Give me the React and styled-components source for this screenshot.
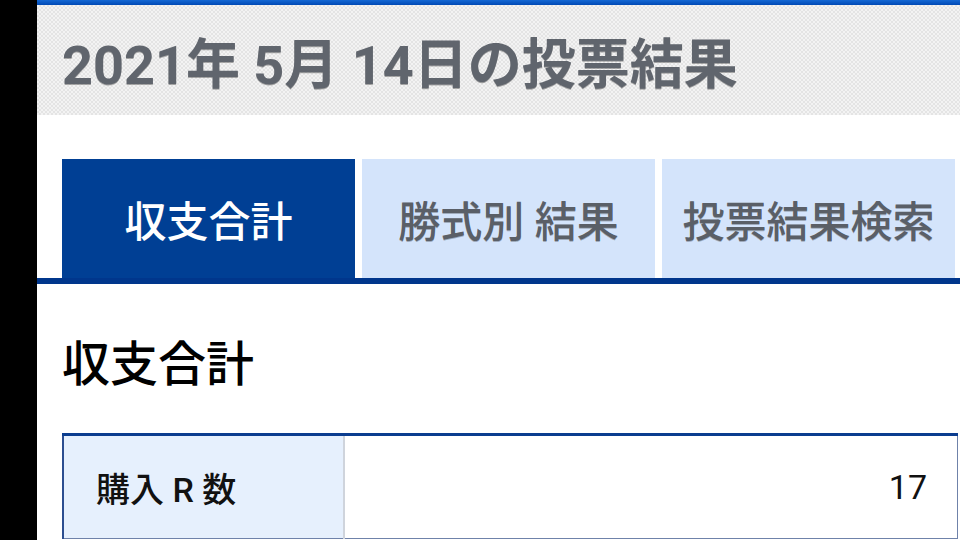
import React from "react";
import styled, { createGlobalStyle } from "styled-components";

const GlobalStyle = createGlobalStyle`
  html, body {
    margin: 0;
    padding: 0;
    background: #000;
  }
  body {
    font-family: Roboto, "Noto Sans CJK JP", "Noto Sans", sans-serif;
  }
`;

const Page = styled.div`
  margin-left: 37px;
  width: 923px;
  height: 540px;
  background: #fff;
  overflow: hidden;
`;

const TopBar = styled.div`
  height: 5px;
  background: linear-gradient(#1468d4, #0049b4);
`;

const Header = styled.header`
  height: 110px;
  display: flex;
  align-items: center;
  padding-left: 25px;
  background-color: #f3f3f3;
  background-image: conic-gradient(#e4e4e4 25%, transparent 0 50%, #e4e4e4 0 75%, transparent 0);
  background-size: 4px 4px;
`;

const Title = styled.h1`
  margin: 0;
  font-size: 54px;
  font-weight: 700;
  color: #60656d;
  text-shadow: 0 1px 0 rgba(0, 0, 0, 0.3);
  white-space: nowrap;
`;

const TabBar = styled.nav`
  margin-top: 44px;
  display: flex;
  gap: 7px;
  padding: 0 5px 0 25px;
  border-bottom: 6px solid #00368c;
`;

const Tab = styled.div`
  flex: 1;
  height: 119px;
  display: flex;
  align-items: center;
  justify-content: center;
  font-size: 42px;
  font-weight: 500;
  white-space: nowrap;
  background: ${(p) => (p.$active ? "#003f94" : "#d4e4fb")};
  color: ${(p) => (p.$active ? "#ffffff" : "#5a5f67")};
  text-shadow: ${(p) => (p.$active ? "none" : "0 1px 0 rgba(0,0,0,0.25)")};
`;

const SectionTitle = styled.h2`
  margin: 47px 0 0 25px;
  font-size: 48px;
  line-height: 67px;
  font-weight: 500;
  color: #000;
`;

const Table = styled.table`
  margin: 35px 2px 0 25px;
  width: 896px;
  border-collapse: collapse;
  border-top: 3px solid #0b3d8f;
  border-left: 2px solid #2c4e90;
  border-right: 1px solid #6f82aa;
  border-bottom: 1px solid #6f82aa;
`;

const LabelCell = styled.th`
  width: 247px;
  height: 102px;
  padding: 0 0 0 32px;
  background: #e6f0fd;
  border-right: 2px solid #cfd4dc;
  text-align: left;
  font-size: 34px;
  font-weight: 500;
  color: #111;
  white-space: nowrap;
`;

const ValueCell = styled.td`
  padding: 0 30px 0 0;
  text-align: right;
  font-size: 34px;
  font-weight: 400;
  color: #111;
`;

export default function App() {
  const tabs = [
    { label: "収支合計", active: true },
    { label: "勝式別 結果" },
    { label: "投票結果検索" },
  ];
  return (
    <>
      <GlobalStyle />
      <Page>
        <TopBar />
        <Header>
          <Title>2021年 5月 14日の投票結果</Title>
        </Header>
        <TabBar>
          {tabs.map((t) => (
            <Tab key={t.label} $active={t.active}>
              {t.label}
            </Tab>
          ))}
        </TabBar>
        <SectionTitle>収支合計</SectionTitle>
        <Table>
          <tbody>
            <tr>
              <LabelCell>購入 R 数</LabelCell>
              <ValueCell>17</ValueCell>
            </tr>
          </tbody>
        </Table>
      </Page>
    </>
  );
}
